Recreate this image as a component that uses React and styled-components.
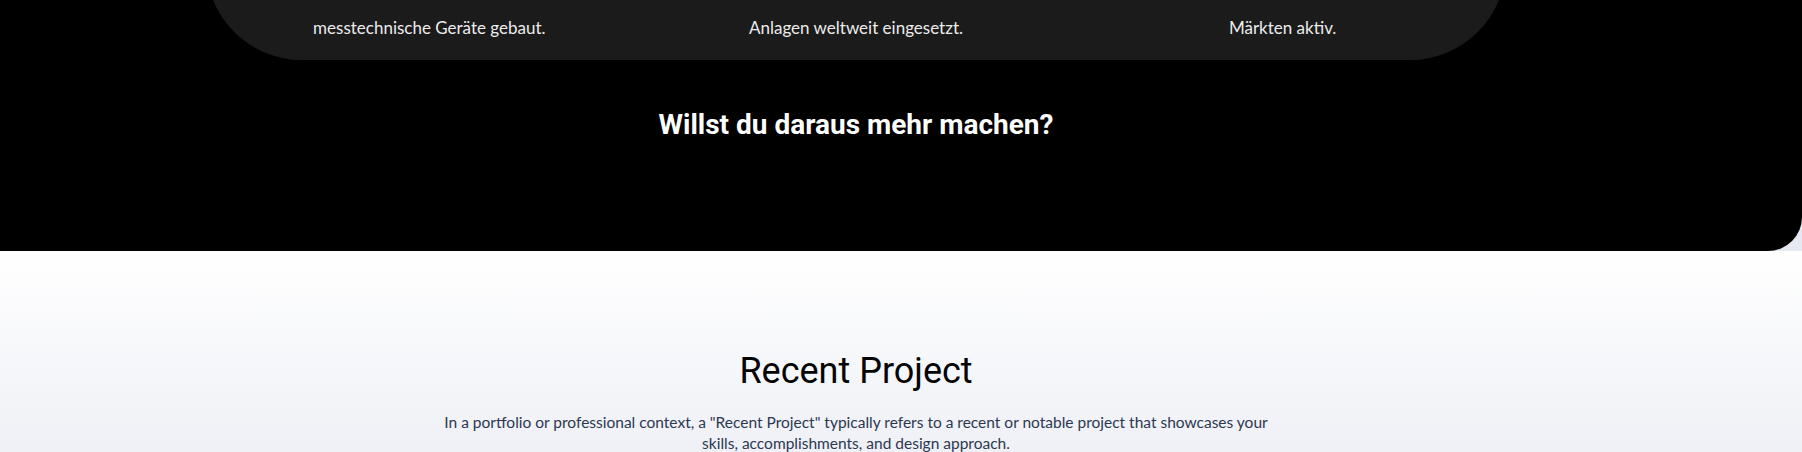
import React from "react";
import styled, { createGlobalStyle } from "styled-components";

const GlobalStyle = createGlobalStyle`
  html, body {
    margin: 0;
    padding: 0;
    background: #e6e9f1;
    overflow: hidden;
  }
`;

const Page = styled.div`
  width: 1802px;
  height: 452px;
  overflow: hidden;
`;

const DarkSection = styled.section`
  background: #000;
  height: 251px;
  border-bottom-right-radius: 34px;
  padding-right: 90px;
  box-sizing: border-box;
  display: flex;
  flex-direction: column;
  align-items: center;
`;

const StatsCard = styled.div`
  width: 1300px;
  margin-top: -140px;
  padding: 155px 10px 19px;
  box-sizing: border-box;
  background: #1b1b1b;
  border-radius: 0 0 96px 96px;
  display: grid;
  grid-template-columns: repeat(3, 1fr);
`;

const StatText = styled.p`
  margin: 0;
  text-align: center;
  color: #ececec;
  font-family: Lato, "Open Sans", sans-serif;
  font-size: 17px;
  line-height: 26px;
`;

const CallOut = styled.h2`
  margin: 48px 0 0;
  color: #fff;
  font-family: Roboto, "Liberation Sans", sans-serif;
  font-weight: 700;
  font-size: 28px;
  line-height: 34px;
`;

const ProjectSection = styled.section`
  background: linear-gradient(180deg, #ffffff 0%, #e2e5ef 100%);
  height: 260px;
  padding: 99px 90px 0 0;
  display: flex;
  flex-direction: column;
  align-items: center;
`;

const Title = styled.h2`
  margin: 0;
  color: #050505;
  font-family: Roboto, "Liberation Sans", sans-serif;
  font-weight: 400;
  font-size: 36px;
  line-height: 43px;
`;

const Lead = styled.p`
  margin: 19px 0 0;
  max-width: 830px;
  text-align: center;
  color: #2c3850;
  font-family: Lato, "Open Sans", sans-serif;
  font-size: 15.5px;
  line-height: 21px;
`;

const stats = [
  "messtechnische Geräte gebaut.",
  "Anlagen weltweit eingesetzt.",
  "Märkten aktiv.",
];

export default function App() {
  return (
    <Page>
      <GlobalStyle />
      <DarkSection>
        <StatsCard>
          {stats.map((s) => (
            <StatText key={s}>{s}</StatText>
          ))}
        </StatsCard>
        <CallOut>Willst du daraus mehr machen?</CallOut>
      </DarkSection>
      <ProjectSection>
        <Title>Recent Project</Title>
        <Lead>
          In a portfolio or professional context, a "Recent Project" typically
          refers to a recent or notable project that showcases your skills,
          accomplishments, and design approach.
        </Lead>
      </ProjectSection>
    </Page>
  );
}
